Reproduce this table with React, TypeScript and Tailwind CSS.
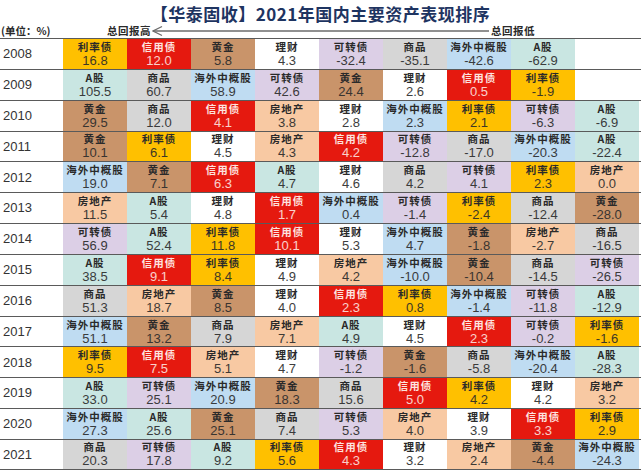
import React from "react";

type Cell = [string, string];

const colorMap: Record<string, string> = {
  利率债: "bg-[#ffc000] text-[#2a2a2a]",
  信用债: "bg-[#e5190f] text-[#fde4e0]",
  黄金: "bg-[#c9946a] text-[#2a2a2a]",
  理财: "bg-white text-[#2a2a2a]",
  可转债: "bg-[#dccfe6] text-[#2a2a2a]",
  商品: "bg-[#d6d6d6] text-[#2a2a2a]",
  海外中概股: "bg-[#bfdcf2] text-[#2a2a2a]",
  A股: "bg-[#c9e6e2] text-[#2a2a2a]",
  房地产: "bg-[#f8c9a3] text-[#2a2a2a]",
};

const data: [string, Cell[]][] = [
  ["2008", [["利率债", "16.8"], ["信用债", "12.0"], ["黄金", "5.8"], ["理财", "4.3"], ["可转债", "-32.4"], ["商品", "-35.1"], ["海外中概股", "-42.6"], ["A股", "-62.9"]]],
  ["2009", [["A股", "105.5"], ["商品", "60.7"], ["海外中概股", "58.9"], ["可转债", "42.6"], ["黄金", "24.4"], ["理财", "2.6"], ["信用债", "0.5"], ["利率债", "-1.9"]]],
  ["2010", [["黄金", "29.5"], ["商品", "12.0"], ["信用债", "4.1"], ["房地产", "3.8"], ["理财", "2.8"], ["海外中概股", "2.3"], ["利率债", "2.1"], ["可转债", "-6.3"], ["A股", "-6.9"]]],
  ["2011", [["黄金", "10.1"], ["利率债", "6.1"], ["理财", "4.5"], ["房地产", "4.3"], ["信用债", "4.2"], ["可转债", "-12.8"], ["商品", "-17.0"], ["海外中概股", "-20.3"], ["A股", "-22.4"]]],
  ["2012", [["海外中概股", "19.0"], ["黄金", "7.1"], ["信用债", "6.3"], ["A股", "4.7"], ["理财", "4.6"], ["商品", "4.2"], ["可转债", "4.1"], ["利率债", "2.3"], ["房地产", "0.0"]]],
  ["2013", [["房地产", "11.5"], ["A股", "5.4"], ["理财", "4.8"], ["信用债", "1.7"], ["海外中概股", "0.4"], ["可转债", "-1.4"], ["利率债", "-2.4"], ["商品", "-12.4"], ["黄金", "-28.0"]]],
  ["2014", [["可转债", "56.9"], ["A股", "52.4"], ["利率债", "11.8"], ["信用债", "10.1"], ["理财", "5.3"], ["海外中概股", "4.7"], ["黄金", "-1.8"], ["房地产", "-2.7"], ["商品", "-16.5"]]],
  ["2015", [["A股", "38.5"], ["信用债", "9.1"], ["利率债", "8.4"], ["理财", "4.9"], ["房地产", "4.2"], ["海外中概股", "-10.0"], ["黄金", "-10.4"], ["商品", "-14.5"], ["可转债", "-26.5"]]],
  ["2016", [["商品", "51.3"], ["房地产", "18.7"], ["黄金", "8.5"], ["理财", "4.0"], ["信用债", "2.3"], ["利率债", "0.8"], ["海外中概股", "-1.4"], ["可转债", "-11.8"], ["A股", "-12.9"]]],
  ["2017", [["海外中概股", "51.1"], ["黄金", "13.2"], ["商品", "7.9"], ["房地产", "7.1"], ["A股", "4.9"], ["理财", "4.5"], ["信用债", "2.3"], ["可转债", "-0.2"], ["利率债", "-1.6"]]],
  ["2018", [["利率债", "9.5"], ["信用债", "7.5"], ["房地产", "5.1"], ["理财", "4.7"], ["可转债", "-1.2"], ["黄金", "-1.6"], ["商品", "-5.8"], ["海外中概股", "-20.4"], ["A股", "-28.3"]]],
  ["2019", [["A股", "33.0"], ["可转债", "25.1"], ["海外中概股", "20.9"], ["黄金", "18.3"], ["商品", "15.6"], ["信用债", "5.0"], ["利率债", "4.2"], ["理财", "4.2"], ["房地产", "3.2"]]],
  ["2020", [["海外中概股", "27.3"], ["A股", "25.6"], ["黄金", "25.1"], ["商品", "7.4"], ["可转债", "5.3"], ["房地产", "4.0"], ["理财", "3.9"], ["信用债", "3.3"], ["利率债", "2.9"]]],
  ["2021", [["商品", "20.3"], ["可转债", "17.8"], ["A股", "9.2"], ["利率债", "5.6"], ["信用债", "4.3"], ["理财", "3.2"], ["房地产", "2.4"], ["黄金", "-4.4"], ["海外中概股", "-24.3"]]],
];

const cjk = "font-['Noto_Sans_CJK_SC',sans-serif]";
const lat = "font-['Liberation_Sans','Noto_Sans_CJK_SC',sans-serif]";

export default function App() {
  return (
    <div className="w-[641px] h-[471px] bg-white overflow-hidden flex flex-col">
      <div className={`h-[24px] flex items-center justify-center pt-[4px] text-[17px] font-bold text-[#1e3461] ${cjk} tracking-[0.5px] whitespace-nowrap`}>
        【华泰固收】2021年国内主要资产表现排序
      </div>
      <div className={`h-[14px] flex items-center text-[10.5px] font-bold text-[#2a2a2a] ${cjk} whitespace-nowrap`}>
        <div className="w-[107px] shrink-0 pl-[1px]">(单位：%)</div>
        <div className="w-[45px] shrink-0 tracking-[0.5px]">总回报高</div>
        <svg width="337" height="12" viewBox="0 0 337 12" className="shrink-0">
          <line x1="1" y1="6" x2="337" y2="6" stroke="#6b6b6b" strokeWidth="1.3" />
          <polyline points="10,1.5 1,6 10,10.5" fill="none" stroke="#6b6b6b" strokeWidth="1.3" />
        </svg>
        <div className="shrink-0 pl-[2px] tracking-[0.5px]">总回报低</div>
      </div>
      <div className="flex flex-col">
        {data.map(([year, cells], ri) => (
          <div
            key={year}
            className={`h-[30.85px] flex border-t-[1.5px] border-[#5a5a5a] ${ri === data.length - 1 ? "border-b-[1.5px]" : ""}`}
          >
            <div className={`w-[63px] shrink-0 flex items-center pl-[3px] text-[13px] text-[#333] ${lat}`}>{year}</div>
            {Array.from({ length: 9 }).map((_, ci) => {
              const c = cells[ci];
              if (!c) return <div key={ci} className="w-[64px] shrink-0 bg-white" />;
              return (
                <div
                  key={ci}
                  className={`w-[64px] shrink-0 flex flex-col items-center justify-center ${colorMap[c[0]]}`}
                >
                  <div className={`text-[10.5px] leading-[13px] font-bold tracking-[1px] whitespace-nowrap ${cjk}`}>{c[0]}</div>
                  <div className={`text-[13px] leading-[15px] ${lat} opacity-90`}>{c[1]}</div>
                </div>
              );
            })}
          </div>
        ))}
      </div>
    </div>
  );
}
